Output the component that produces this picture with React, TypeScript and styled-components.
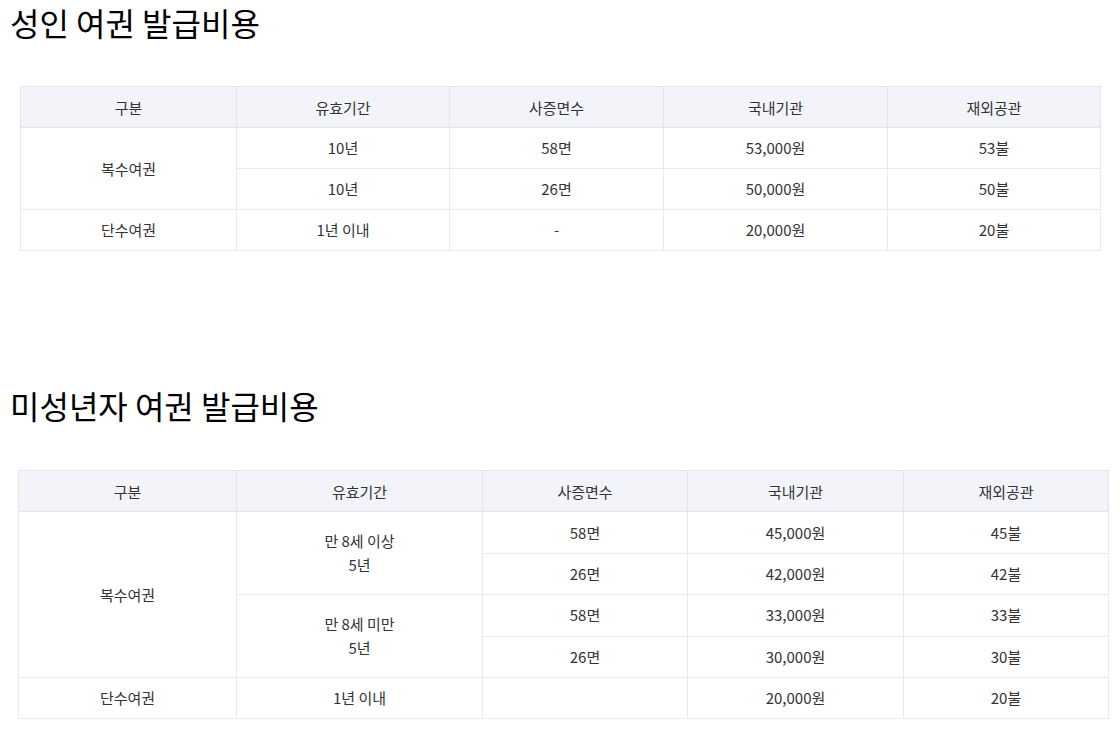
import React from 'react'
import styled, { createGlobalStyle } from 'styled-components'

const GlobalStyle = createGlobalStyle`
  body {
    margin: 0;
    background: #ffffff;
    font-family: 'Noto Sans CJK KR', 'Noto Sans', sans-serif;
  }
`

const Page = styled.div`
  padding: 0 10px;
`

const Title = styled.h2<{ $top: number }>`
  margin: ${(p) => p.$top}px 0 0;
  font-size: 32px;
  line-height: 44px;
  font-weight: 400;
  color: #000;
  font-family: 'Noto Sans CJK KR', sans-serif;
`

const Table = styled.table<{ $top: number; $left: number; $width: number; $row: number }>`
  margin: ${(p) => p.$top}px 0 0 ${(p) => p.$left}px;
  width: ${(p) => p.$width}px;
  border-collapse: collapse;
  table-layout: fixed;
  border: 1px solid #e4e5ea;
  font-size: 15px;
  color: #333;

  th,
  td {
    height: ${(p) => p.$row}px;
  }
`

const Th = styled.th`
  background: #f3f4f9;
  font-weight: 400;
  padding: 0;
  border: 1px solid #e4e5ea;
  text-align: center;
  color: #333;
`

const Td = styled.td`
  padding: 0;
  border: 1px solid #e8e9ec;
  text-align: center;
  line-height: 24px;
`

interface Row {
  kind?: { label: string; span: number }
  period?: { label: string[]; span: number }
  pages: string
  domestic: string
  abroad: string
}

const adult: Row[] = [
  { kind: { label: '복수여권', span: 2 }, period: { label: ['10년'], span: 1 }, pages: '58면', domestic: '53,000원', abroad: '53불' },
  { period: { label: ['10년'], span: 1 }, pages: '26면', domestic: '50,000원', abroad: '50불' },
  { kind: { label: '단수여권', span: 1 }, period: { label: ['1년 이내'], span: 1 }, pages: '-', domestic: '20,000원', abroad: '20불' },
]

const minor: Row[] = [
  { kind: { label: '복수여권', span: 4 }, period: { label: ['만 8세 이상', '5년'], span: 2 }, pages: '58면', domestic: '45,000원', abroad: '45불' },
  { pages: '26면', domestic: '42,000원', abroad: '42불' },
  { period: { label: ['만 8세 미만', '5년'], span: 2 }, pages: '58면', domestic: '33,000원', abroad: '33불' },
  { pages: '26면', domestic: '30,000원', abroad: '30불' },
  { kind: { label: '단수여권', span: 1 }, period: { label: ['1년 이내'], span: 1 }, pages: '', domestic: '20,000원', abroad: '20불' },
]

const heads = ['구분', '유효기간', '사증면수', '국내기관', '재외공관']

interface FeeTableProps {
  rows: Row[]
  cols: number[]
  top: number
  left: number
  width: number
  row: number
}

const FeeTable = ({ rows, cols, top, left, width, row }: FeeTableProps) => (
  <Table $top={top} $left={left} $width={width} $row={row}>
    <colgroup>
      {cols.map((c, i) => (
        <col key={i} style={{ width: c }} />
      ))}
    </colgroup>
    <thead>
      <tr>
        {heads.map((h) => (
          <Th key={h}>{h}</Th>
        ))}
      </tr>
    </thead>
    <tbody>
      {rows.map((r, i) => (
        <tr key={i}>
          {r.kind && <Td rowSpan={r.kind.span}>{r.kind.label}</Td>}
          {r.period && (
            <Td rowSpan={r.period.span}>
              {r.period.label.map((l, j) => (
                <div key={j}>{l}</div>
              ))}
            </Td>
          )}
          <Td>{r.pages}</Td>
          <Td>{r.domestic}</Td>
          <Td>{r.abroad}</Td>
        </tr>
      ))}
    </tbody>
  </Table>
)

export default function App() {
  return (
    <Page>
      <GlobalStyle />
      <Title $top={0}>성인 여권 발급비용</Title>
      <FeeTable rows={adult} cols={[216, 213, 214, 224, 213]} top={42} left={10} width={1080} row={40} />
      <Title $top={132}>미성년자 여권 발급비용</Title>
      <FeeTable rows={minor} cols={[218, 246, 205, 216, 205]} top={43} left={8} width={1090} row={40.4} />
    </Page>
  )
}
